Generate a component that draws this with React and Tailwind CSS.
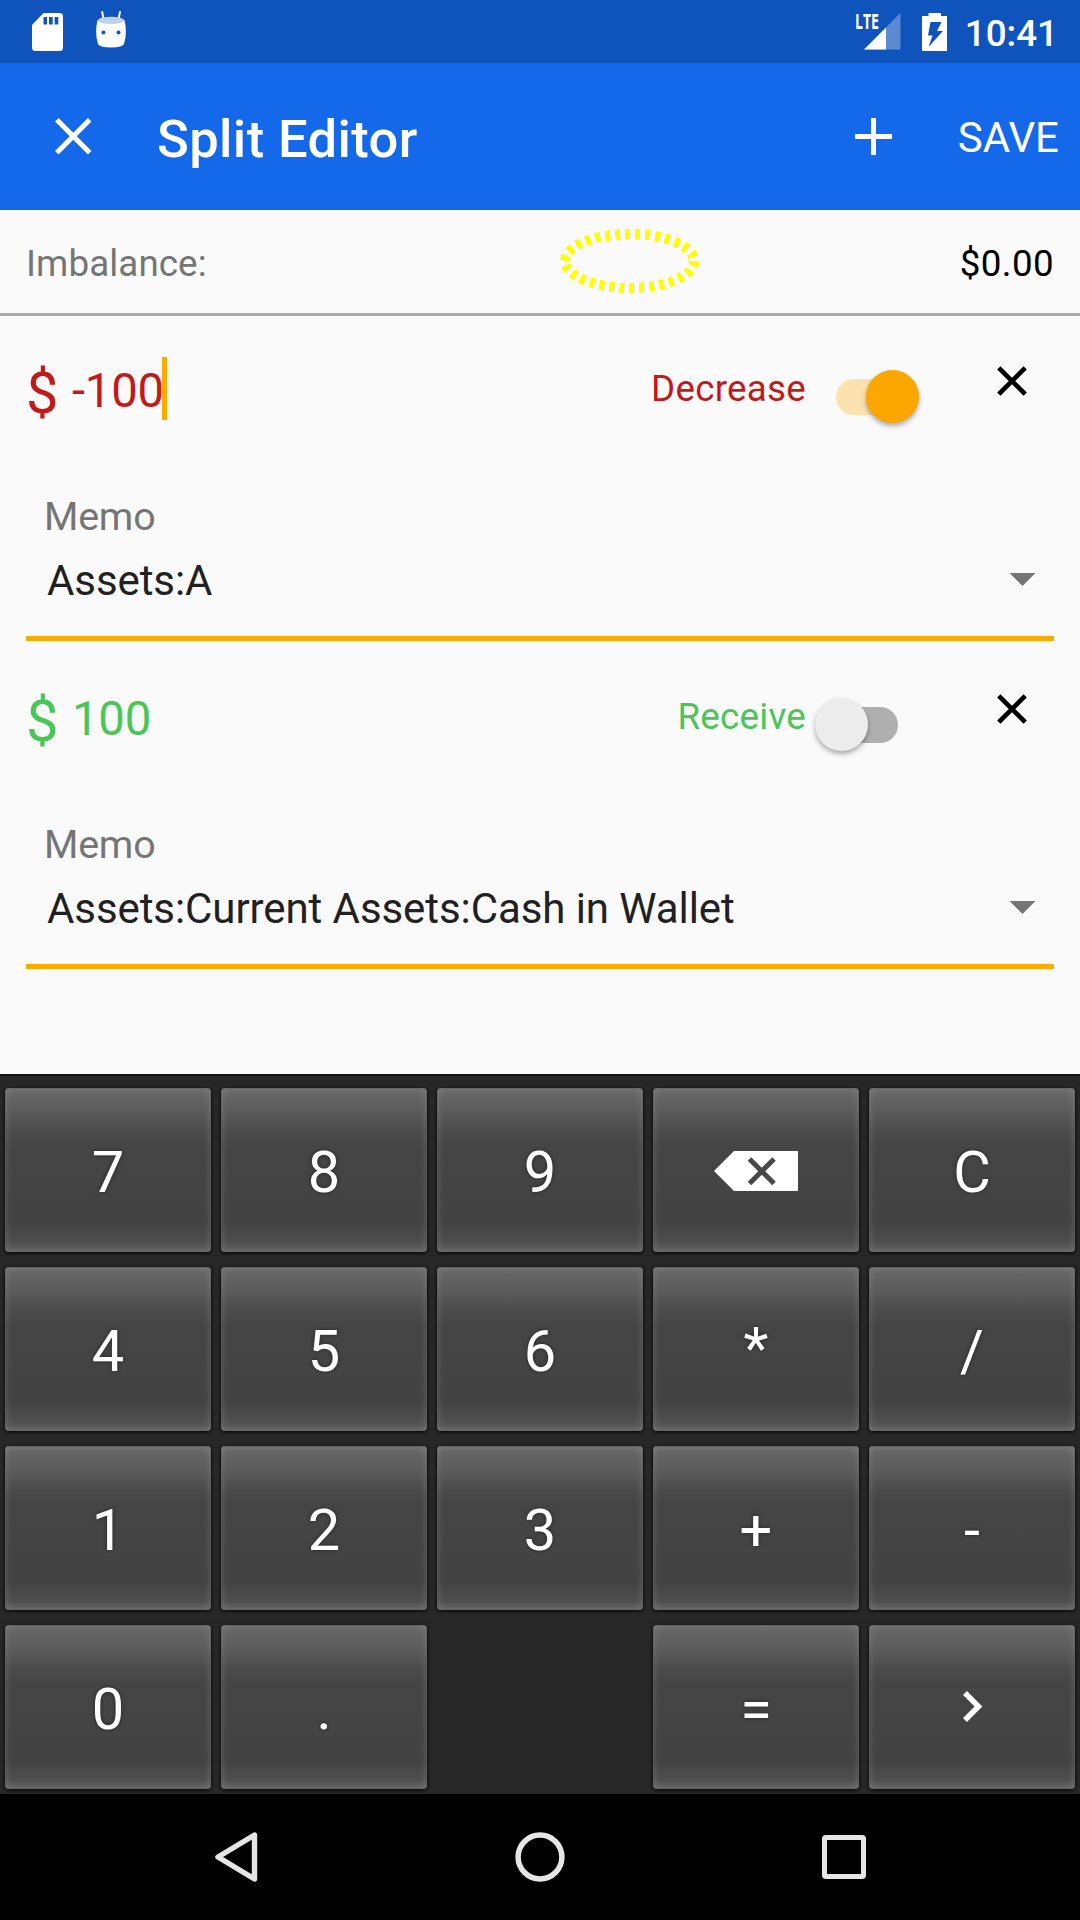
import React from "react";

const splits = [
  { amount: "-100", label: "Decrease", on: true, focused: true, account: "Assets:A", color: "text-[#c21a18]" },
  { amount: "100", label: "Receive", on: false, focused: false, account: "Assets:Current Assets:Cash in Wallet", color: "text-[#4ac657]" },
];

const keys = ["7", "8", "9", "back", "C", "4", "5", "6", "*", "/", "1", "2", "3", "+", "-", "0", ".", "", "=", "next"];

function Cross({ className, size, strokeWidth }) {
  return (
    <svg className={className} width={size} height={size} viewBox={`0 0 ${size} ${size}`} stroke="currentColor" strokeWidth={strokeWidth}>
      <path d={`M1.8 1.8L${size - 1.8} ${size - 1.8}M${size - 1.8} 1.8L1.8 ${size - 1.8}`} />
    </svg>
  );
}

function StatusBar() {
  return (
    <div className="flex h-[63px] items-center bg-[#0f54bc] pl-8 text-white">
      <svg width="31" height="38" viewBox="0 0 31 38" className="mr-8">
        <path fill="#fff" fillRule="evenodd" d="M11.5 0H27.5Q31 0 31 3.5V34.500Q31 38 27.500 38H3.500Q0 38 0 34.500V12ZM11.500 4V11.500H15V4ZM17 4V11.500H20.700V4ZM22.700 4V11.500H26.300V4Z" />
      </svg>
      <svg width="32" height="38" viewBox="0 0 32 38" className="mb-[3px]">
        <path d="M7.200 1L8.500 8M25 1L23.500 8" stroke="#fff" strokeWidth="2" fill="none" strokeLinecap="round" />
        <path fill="#fff" d="M2.500 9Q16 15 29.500 9Q32.500 22 29 33Q28 36 16 36.600Q4 36 3 33Q-0.500 22 2.500 9Z" />
        <ellipse cx="16" cy="9.400" rx="13" ry="3.700" fill="#c0d1ee" />
        <circle cx="8.400" cy="21.400" r="2" fill="#0f54bc" />
        <circle cx="23.500" cy="21.400" r="2" fill="#0f54bc" />
      </svg>
      <div className="ml-auto flex items-center">
        <svg width="46" height="37" viewBox="0 0 46 37" className="overflow-visible">
          <path d="M45.500 0V36.500H9Z" fill="#5b8ad2" />
          <path d="M31 14.500V36.500H9Z" fill="#fff" />
          <path d="M0 0H25V17H0Z" fill="#0f54bc" />
          <text x="0" y="16.200" fill="#fff" fontFamily="'Open Sans', Roboto, sans-serif" fontSize="22" fontWeight="700" textLength="24" lengthAdjust="spacingAndGlyphs">LTE</text>
        </svg>
        <svg width="25" height="38" viewBox="0 0 25 38" className="ml-[21px]">
          <path fill="#fff" fillRule="evenodd" d="M6.500 0H19V3H25V38H0V3H6.500ZM8.500 9L6 22.500H10.500L6.500 34L21 18H15L19.500 9Z" />
        </svg>
        <span className="ml-[18px] mr-[22px] pt-1 text-[36.75px] leading-[44px] font-medium">10:41</span>
      </div>
    </div>
  );
}

function AppBar() {
  return (
    <div className="flex h-[147px] items-center bg-[#1469eb] pl-[55px] text-white">
      <Cross size={36.5} strokeWidth={5} />
      <h1 className="ml-[65.5px] pt-[5px] text-[52.5px] leading-[62px] font-medium tracking-[0.4px]">Split Editor</h1>
      <svg width="37" height="37" viewBox="0 0 37 37" className="mb-[1px] ml-auto" fill="#fff">
        <path d="M16 0H21V16H37V21H21V37H16V21H0V16H16Z" />
      </svg>
      <span className="ml-[66px] mr-[21px] pt-[2px] text-[42px] leading-[50px]">SAVE</span>
    </div>
  );
}

function Toggle({ on }) {
  return (
    <div className="relative mt-[12px] flex h-[54px] w-[104px] items-center justify-center">
      <div className={`h-9 w-[62px] rounded-full ${on ? "bg-[#fde2b0]" : "bg-[#afafaf]"}`} />
      <div className={`absolute top-0 h-[53px] w-[53px] rounded-full shadow-[0_3px_5px_rgba(0,0,0,0.32)] ${on ? "right-0 bg-[#fba700]" : "left-0 bg-[#ececec]"}`} />
    </div>
  );
}

function SplitRow({ split }) {
  return (
    <div className="mx-[26px] h-[325px] border-b-[5px] border-[#ffaa00]">
      <div className={`mb-[26px] flex h-[150px] items-center ${split.color}`}>
        <span className="w-[46px] pt-[3px] text-[57.75px] leading-[68px]">$</span>
        <span className="text-[47.25px] leading-[56px] tracking-[-0.2px]">{split.amount}</span>
        {split.focused && <span className="mb-[5px] -ml-0.5 h-[63px] w-[5px] bg-[#ffaa00]" />}
        <span className="ml-auto mr-[9px] pb-[5px] text-[36.75px] leading-[44px] tracking-[0.25px]">{split.label}</span>
        <Toggle on={split.on} />
        <Cross className="mb-5 ml-[78px] mr-[27px] text-black" size={30} strokeWidth={4.6} />
      </div>
      <div className="pl-[18px] text-[39.375px] leading-[49px] tracking-[-0.2px] text-[#757575]">Memo</div>
      <div className="flex h-20 items-center justify-between pl-[21px] pr-[18px] text-[42px] tracking-[-0.08px] text-[#212121]">
        <span className="pb-[2px]">{split.account}</span>
        <svg width="27" height="13" viewBox="0 0 27 13" className="mb-1" fill="#757575"><path d="M0.500 0H26.500L13.500 13Z" /></svg>
      </div>
    </div>
  );
}

function Key({ value }) {
  if (!value) return <div />;
  return (
    <button className="flex h-[164px] justify-center rounded-[4px] bg-[linear-gradient(180deg,#686868_0%,#5c5c5c_14%,#4b4b4b_27%,#454545_36%,#434343_83%,#4f4f4f_94%,#5e5e5e_100%)] pt-[50px] text-[57.75px] leading-[68px] text-white shadow-[inset_0_0_8px_rgba(255,255,255,0.18),inset_0_0_0_1px_rgba(80,80,80,0.6),0_1px_3px_1px_rgba(0,0,0,0.65)] [text-shadow:0_0_4px_rgba(0,0,0,0.45)]">
      {value === "back" ? (
        <svg width="84" height="40" viewBox="0 0 84 40" className="mt-[13px] mr-[1px]">
          <path d="M20 0H84V40H20L0 20Z" fill="#fff" />
          <path d="M35.500 8L60 32.500M60 8L35.500 32.500" stroke="#484848" strokeWidth="5" />
        </svg>
      ) : value === "next" ? (
        <svg width="20" height="31" viewBox="0 0 20 31" className="mt-4 ml-px">
          <path d="M2 2L15.500 15.500L2 29" fill="none" stroke="#fff" strokeWidth="5.500" />
        </svg>
      ) : (
        <span className={value === "*" ? "-mt-[3px]" : ""}>{value}</span>
      )}
    </button>
  );
}

function NavBar() {
  return (
    <div className="flex h-[126px] items-center bg-black pl-[214px]">
      <svg width="44" height="52" viewBox="0 0 44 52" fill="none" stroke="#e6e6e6" strokeWidth="5.400" strokeLinejoin="round"><path d="M40.500 4V48L4 26Z" /></svg>
      <svg width="50" height="50" viewBox="0 0 50 50" className="ml-[257px]" fill="none" stroke="#e6e6e6" strokeWidth="5.500"><circle cx="25" cy="25" r="21.900" /></svg>
      <div className="ml-[257px] h-11 w-11 rounded-[4px] border-[5.5px] border-[#e6e6e6]" />
    </div>
  );
}

export default function App() {
  return (
    <div className="flex h-[1920px] w-[1080px] flex-col overflow-hidden bg-[#fafafa] font-[Roboto,sans-serif]">
      <StatusBar />
      <AppBar />
      <div className="relative flex h-[106px] items-center justify-between border-b-[3px] border-[#aaaaaa] px-[26px] pt-1 text-[36.75px]">
        <span className="tracking-[0.1px] text-[#757575]">Imbalance:</span>
        <span className="tracking-[0.4px] text-black">$0.00</span>
        <svg className="absolute top-[18px] left-[559px]" width="142" height="68" viewBox="0 0 142 68" fill="none">
          <ellipse cx="70.500" cy="33" rx="64.500" ry="27" stroke="#ffff00" strokeWidth="10" strokeDasharray="5 5" shapeRendering="crispEdges" />
        </svg>
      </div>
      <div className="flex flex-1 flex-col gap-[3px]">
        {splits.map((s) => <SplitRow key={s.label} split={s} />)}
      </div>
      <div className="grid h-[720px] grid-cols-5 content-start gap-x-[10px] gap-y-[15px] border-t-2 border-[#101010] bg-[#272727] px-[5px] pt-3">
        {keys.map((k, i) => <Key key={i} value={k} />)}
      </div>
      <NavBar />
    </div>
  );
}
